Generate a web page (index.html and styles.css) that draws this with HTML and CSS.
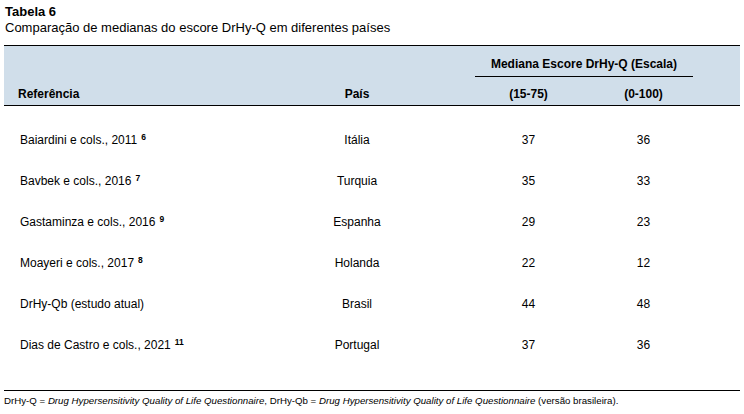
FILE: index.html
```html
<!DOCTYPE html>
<html lang="pt">
<head>
<meta charset="utf-8">
<link rel="stylesheet" href="styles.css">
</head>
<body>
<div class="page">
  <div class="title">Tabela 6</div>
  <div class="subtitle">Comparação de medianas do escore DrHy-Q em diferentes países</div>
  <div class="table">
    <div class="head">
      <div class="h-ref">Referência</div>
      <div class="h-pais">País</div>
      <div class="h-group"><span class="grp">Mediana Escore DrHy-Q (Escala)</span></div>
      <div class="h-a">(15-75)</div>
      <div class="h-b">(0-100)</div>
    </div>
    <div class="body">
      <div class="row"><div class="ref">Baiardini e cols., 2011<sup>6</sup></div><div class="c">Itália</div><div class="c">37</div><div class="c">36</div></div>
      <div class="row"><div class="ref">Bavbek e cols., 2016<sup>7</sup></div><div class="c">Turquia</div><div class="c">35</div><div class="c">33</div></div>
      <div class="row"><div class="ref">Gastaminza e cols., 2016<sup>9</sup></div><div class="c">Espanha</div><div class="c">29</div><div class="c">23</div></div>
      <div class="row"><div class="ref">Moayeri e cols., 2017<sup>8</sup></div><div class="c">Holanda</div><div class="c">22</div><div class="c">12</div></div>
      <div class="row"><div class="ref">DrHy-Qb (estudo atual)</div><div class="c">Brasil</div><div class="c">44</div><div class="c">48</div></div>
      <div class="row"><div class="ref">Dias de Castro e cols., 2021<sup>11</sup></div><div class="c">Portugal</div><div class="c">37</div><div class="c">36</div></div>
    </div>
  </div>
  <div class="note">DrHy-Q = <i>Drug Hypersensitivity Quality of Life Questionnaire</i>, DrHy-Qb = <i>Drug Hypersensitivity Quality of Life Questionnaire</i> (versão brasileira).</div>
</div>
</body>
</html>
```

FILE: styles.css
```css
* { box-sizing: border-box; }
html, body { margin: 0; padding: 0; background: #fff; }
body {
  font-family: "Liberation Sans", Arial, sans-serif;
  color: #000;
  width: 744px;
  height: 414px;
  overflow: hidden;
}
.page { padding: 4px 4px 0 4px; }
.title {
  font-size: 13px;
  font-weight: bold;
  line-height: 16px;
  padding-left: 1px;
}
.subtitle {
  font-size: 13px;
  line-height: 16px;
  padding-left: 1px;
  margin-bottom: 9px;
}
.table {
  width: 736px;
  border-top: 1.5px solid #000;
  border-bottom: 1px solid #000;
}
.head {
  background: #d0deea;
  display: grid;
  grid-template-columns: 240px 226px 117px 113px 40px;
  grid-template-rows: 31px 28px;
  border-bottom: 1.5px solid #000;
  font-size: 12px;
  font-weight: bold;
  line-height: 14px;
}
.h-ref {
  grid-column: 1; grid-row: 1 / 3;
  align-self: end;
  padding: 0 0 4px 14px;
}
.h-pais {
  grid-column: 2; grid-row: 1 / 3;
  align-self: end;
  text-align: center;
  padding-bottom: 4px;
}
.h-group {
  grid-column: 3 / 5; grid-row: 1;
  align-self: end;
  padding: 0 7px 0 5px;
}
.grp {
  display: block;
  text-align: center;
  padding-bottom: 5px;
  border-bottom: 1px solid #000;
}
.h-a, .h-b {
  grid-row: 2;
  align-self: end;
  text-align: center;
  padding-bottom: 4px;
}
.h-a { grid-column: 3; }
.h-b { grid-column: 4; }
.body { padding: 13px 0 25px; }
.row {
  display: grid;
  grid-template-columns: 240px 226px 117px 113px;
  height: 41px;
  align-items: center;
  font-size: 12px;
  line-height: 14px;
}
.ref { padding-left: 16px; }
.c { text-align: center; }
sup {
  font-size: 8.5px;
  font-weight: bold;
  line-height: 0;
  vertical-align: 4px;
  margin-left: 4px;
}
.note {
  font-size: 9.7px;
  line-height: 13px;
  margin-top: 3px;
}
```
